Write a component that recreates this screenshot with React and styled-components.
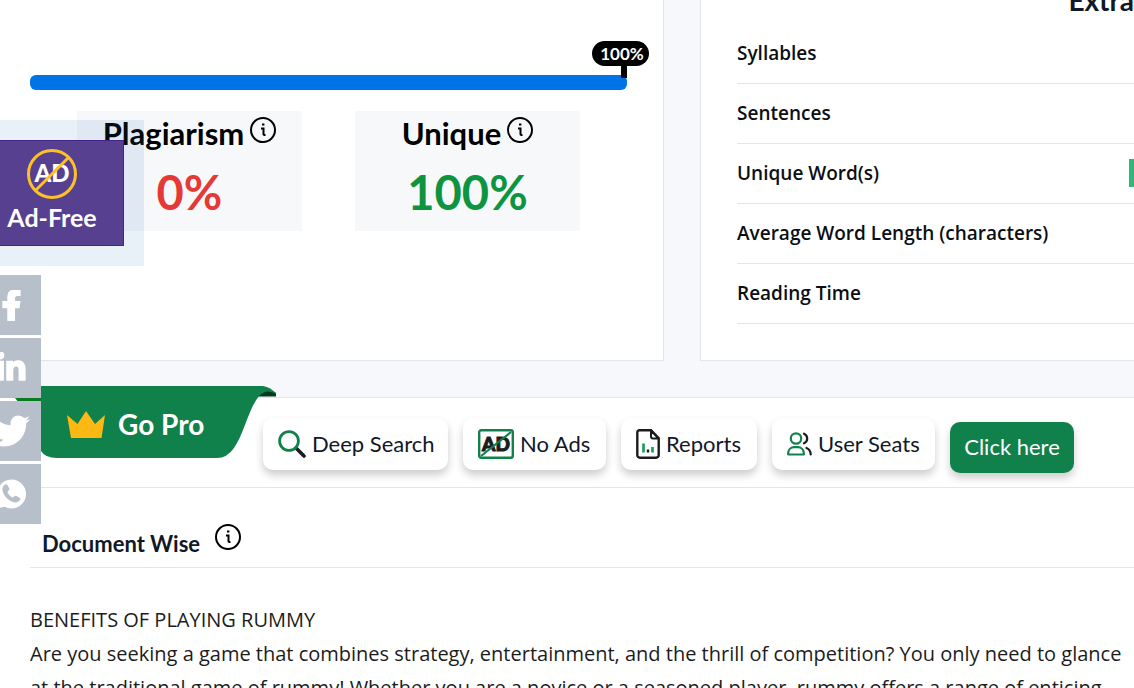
import React from 'react';
import styled, { createGlobalStyle } from 'styled-components';
import { FaFacebookF, FaLinkedinIn, FaTwitter } from 'react-icons/fa';

const GlobalStyle = createGlobalStyle`
  * { box-sizing: border-box; }
  body {
    margin: 0;
    background: #f7f8fb;
    color: #111827;
    font-family: Lato, "Open Sans", sans-serif;
    font-variant-ligatures: none;
    overflow-x: hidden;
  }
  a { color: inherit; text-decoration: none; }
  button { font: inherit; color: inherit; border: 0; padding: 0; background: none; cursor: pointer; }
`;

const stats = [
  { label: 'Syllables' },
  { label: 'Sentences' },
  { label: 'Unique Word(s)', badge: true },
  { label: 'Average Word Length (characters)' },
  { label: 'Reading Time' },
];

const InfoIcon = () => (
  <svg width="26" height="26" viewBox="0 0 26 26" fill="none" stroke="#000" strokeWidth="2">
    <circle cx="13" cy="13" r="12" />
    <path d="M11 11.5h2.5v6M13.5 17.2q0 1 2 .8" />
    <path d="M12 7.5h2.4" />
  </svg>
);

const WhatsappIcon = () => (
  <svg width="30" height="30" viewBox="0 0 30 30">
    <path fill="#fff" d="M15.5 0.5a14.5 14.5 0 1 1-6.8 27.3L0 29.5l2.6-7.8A14.5 14.5 0 0 1 15.500.5z" />
    <path fill="#b7bfca" d="M8.800 5.700c1.200-.9 2.200-.6 2.800.5l1.600 3.200c.4.9.1 1.600-.6 2.200l-1.200 1.300c1 2.500 2.900 4.500 5.500 5.700l1.500-1.400c.6-.6 1.300-.7 2-.3l3.100 1.800c1 .6 1.100 1.500.5 2.400-1.500 2.200-4.200 2.900-7 1.900-5.300-1.900-9-5.800-10.300-10.700-.7-2.700.1-5.100 2.100-6.600z" />
  </svg>
);

const NoAdBadge = () => (
  <svg width="50" height="50" viewBox="0 0 50 50">
    <text x="25" y="33" textAnchor="middle" fontFamily="Lato" fontWeight="900" fontSize="24" fill="#fff">AD</text>
    <circle cx="25" cy="25" r="23.500" fill="none" stroke="#fdc029" strokeWidth="3" />
    <path d="M8.500 41.500L41.500 8.500" stroke="#fdc029" strokeWidth="3" />
  </svg>
);

const SearchIcon = () => (
  <svg width="28" height="28" viewBox="0 0 28 28" fill="none">
    <path d="M18 18l8 8" stroke="#1c1c1c" strokeWidth="3.600" strokeLinecap="round" />
    <circle cx="11" cy="11" r="9.400" stroke="#10814b" strokeWidth="2.800" />
  </svg>
);

const NoAdsIcon = () => (
  <svg width="36" height="30" viewBox="0 0 36 30" fill="none">
    <text x="18" y="22" textAnchor="middle" fontFamily="Lato" fontWeight="900" fontSize="19" fill="#1c1c1c" stroke="#1c1c1c">AD</text>
    <rect x="1.200" y="1.200" width="33.600" height="27.600" rx="2" stroke="#10814b" strokeWidth="2.400" />
    <path d="M3 27L33 3" stroke="#10814b" strokeWidth="2.200" />
  </svg>
);

const ReportIcon = () => (
  <svg width="24" height="30" viewBox="0 0 24 30" fill="none">
    <path d="M3.500 1.300H15l7.700 8V26a2.600 2.600 0 0 1-2.600 2.700H3.900A2.600 2.600 0 0 1 1.300 26V3.500a2.200 2.200 0 0 1 2.200-2.200z" stroke="#1c1c1c" strokeWidth="2.400" />
    <path d="M15 1.500V7.500q0 2 2 2h5.500z" fill="#fff" stroke="#1c1c1c" strokeWidth="2" strokeLinejoin="round" />
    <path d="M7.500 14.500v9M16.500 18v5.500" stroke="#109a55" strokeWidth="2.600" />
    <path d="M12 20.500v3" stroke="#1c1c1c" strokeWidth="2.400" />
  </svg>
);

const UsersIcon = () => (
  <svg width="25" height="24" viewBox="0 0 25 24" fill="none" strokeWidth="2.200" strokeLinecap="round" strokeLinejoin="round">
    <circle cx="9" cy="6.500" r="5.200" stroke="#10814b" />
    <path d="M1.200 22.500v-1.800a6 6 0 0 1 6-5.500h3.600a6 6 0 0 1 6 5.500v1.800z" stroke="#10814b" />
    <path d="M17 1.700a5.200 5.200 0 0 1 0 9.600M19.500 16q4 1.500 4.200 6.500" stroke="#1c1c1c" />
  </svg>
);

const App = () => {
  const unique = 100;

  return (
    <>
      <GlobalStyle />
      <Results>
        <ScorePanel>
          <Track>
            <Fill style={{ width: `${unique}%` }} />
            <Bubble>{unique}%</Bubble>
          </Track>
          <Scores>
            <Score>
              <ScoreTitle>Plagiarism <InfoButton aria-label="About plagiarism"><InfoIcon /></InfoButton></ScoreTitle>
              <ScoreValue $color="#e53935">0%</ScoreValue>
            </Score>
            <Score>
              <ScoreTitle>Unique <InfoButton aria-label="About unique"><InfoIcon /></InfoButton></ScoreTitle>
              <ScoreValue $color="#0d9440">{unique}%</ScoreValue>
            </Score>
          </Scores>
        </ScorePanel>
        <StatsPanel>
          <StatsTitle>Extra</StatsTitle>
          <StatsTable>
            <tbody>
              {stats.map((stat) => (
                <tr key={stat.label}>
                  <th scope="row">{stat.label}</th>
                  <td>{stat.badge && <Badge />}</td>
                </tr>
              ))}
            </tbody>
          </StatsTable>
        </StatsPanel>
      </Results>

      <ProBar>
        <Ribbon>
          <RibbonShape viewBox="0 0 261 74" width="261" height="74">
            <path d="M0 12H27V22H8z" fill="#0a7a1e" />
            <path d="M240 10.500Q246 3 253 4Q259 5 261 7V10.500z" fill="#06391f" />
            <path d="M26 0H248Q256 1 261 8Q252 2 244 10C233 24 229 48 219 62Q212 72 202 72H42Q30 72 26 65z" fill="#10814b" />
          </RibbonShape>
          <RibbonLabel>
            <svg width="38" height="27" viewBox="0 0 38 27">
              <path d="M0 4L10.500 13L19 0L28 13L38 4L34.500 27H4z" fill="#fdb813" />
            </svg>
            Go Pro
          </RibbonLabel>
        </Ribbon>
        <Features>
          <Chip $width={185}><SearchIcon /> Deep Search</Chip>
          <Chip $width={143}><NoAdsIcon /> No Ads</Chip>
          <Chip $width={136}><ReportIcon /> Reports</Chip>
          <Chip $width={163}><UsersIcon /> User Seats</Chip>
          <ProButton>Click here</ProButton>
        </Features>
      </ProBar>

      <Document>
        <DocHeader>
          Document Wise
          <InfoButton aria-label="About document wise"><InfoIcon /></InfoButton>
        </DocHeader>
        <DocText>
          BENEFITS OF PLAYING RUMMY<br />
          Are you seeking a game that combines strategy, entertainment, and the thrill of competition? You only need to glance<br />
          at the traditional game of rummy! Whether you are a novice or a seasoned player, rummy offers a range of enticing
        </DocText>
      </Document>

      <AdFree>
        <AdFreeLink href="#ad-free"><NoAdBadge />Ad-Free</AdFreeLink>
      </AdFree>
      <Social>
        <SocialLink href="#facebook" aria-label="Facebook"><FaFacebookF size={31} stroke="#fff" strokeWidth={28} /></SocialLink>
        <SocialLink href="#linkedin" aria-label="LinkedIn"><FaLinkedinIn size={32} stroke="#fff" strokeWidth={20} /></SocialLink>
        <SocialLink href="#twitter" aria-label="Twitter"><FaTwitter size={38} /></SocialLink>
        <SocialLink href="#whatsapp" aria-label="WhatsApp"><WhatsappIcon /></SocialLink>
      </Social>
    </>
  );
};

const Results = styled.div`
  display: grid;
  grid-template-columns: 664fr 434fr;
  gap: 36px;
  margin-bottom: 36px;
`;

const ScorePanel = styled.section`
  padding: 75px 36px 100px 30px;
  background: #fff;
  border: solid #e2e5ea;
  border-width: 0 1px 1px 0;
`;

const Track = styled.div`
  position: relative;
  height: 15px;
  border-radius: 6px;
  background: #e9ecef;
`;

const Fill = styled.div`
  height: 100%;
  border-radius: 6px;
  background: #0073e6;
`;

const Bubble = styled.span`
  position: absolute;
  right: -22px;
  top: -34px;
  width: 57px;
  padding-left: 3px;
  border-radius: 13px;
  background: #000;
  color: #fff;
  font-size: 17px;
  font-weight: 700;
  line-height: 25px;
  text-align: center;

  &::after {
    content: '';
    position: absolute;
    right: 22px;
    top: 24px;
    width: 6px;
    height: 13px;
    background: #000;
  }
`;

const Scores = styled.div`
  display: flex;
  justify-content: center;
  gap: 53px;
  margin-top: 21px;
`;

const Score = styled.div`
  width: 225px;
  height: 120px;
  background: #f7f8fa;
  text-align: center;
`;

const InfoButton = styled.button`
  display: flex;
`;

const ScoreTitle = styled.h2`
  display: flex;
  justify-content: center;
  gap: 6px;
  margin: 0;
  padding-top: 6px;
  color: #000;
  font-size: 31px;
  font-weight: 700;
  line-height: 32px;
`;

const ScoreValue = styled.div`
  margin-top: 15px;
  color: ${(props) => props.$color};
  font-size: 47px;
  font-weight: 700;
  line-height: 56px;
`;

const StatsPanel = styled.section`
  display: flex;
  flex-direction: column;
  padding: 0 0 36px 36px;
  background: #fff;
  border: solid #e2e5ea;
  border-width: 0 0 1px 1px;
`;

const StatsTitle = styled.h2`
  margin: -18px 0 6px;
  font-size: 28px;
  font-weight: 700;
  line-height: 36px;
  text-align: right;
`;

const StatsTable = styled.table`
  width: 100%;
  border-collapse: separate;
  border-spacing: 0;

  th, td {
    height: 60px;
    padding: 0 0 2px;
    border-bottom: 1px solid #e2e5ea;
    color: #0b0f14;
    font-family: "Open Sans", sans-serif;
    font-size: 19px;
    font-weight: 600;
    text-align: left;
  }
`;

const Badge = styled.span`
  display: block;
  width: 5px;
  height: 28px;
  margin-left: auto;
  background: #2fb878;
`;

const ProBar = styled.section`
  position: relative;
  height: 91px;
  padding: 20px 0 0 263px;
  background: #fff;
  border: solid #e2e5ea;
  border-width: 1px 0;
`;

const Ribbon = styled.div`
  position: absolute;
  left: 15px;
  top: -12px;
`;

const RibbonShape = styled.svg`
  display: block;
`;

const RibbonLabel = styled.div`
  position: absolute;
  left: 52px;
  top: 20px;
  display: flex;
  align-items: center;
  gap: 13px;
  color: #fff;
  font-size: 28px;
  font-weight: 700;
  line-height: 36px;
  white-space: nowrap;
`;

const Features = styled.div`
  display: flex;
  gap: 15px;
`;

const Chip = styled.div`
  display: flex;
  align-items: center;
  gap: 6px;
  width: ${(props) => props.$width}px;
  height: 52px;
  padding: 0 0 0 15px;
  border-radius: 10px;
  background: #fff;
  box-shadow: 0 5px 8px rgba(0, 0, 0, 0.2);
  font-size: 22px;
  line-height: 30px;
  white-space: nowrap;

  svg { flex: none; }
`;

const ProButton = styled.button`
  width: 124px;
  height: 51px;
  margin-top: 4px;
  padding-bottom: 2px;
  border-radius: 10px;
  background: #10814b;
  box-shadow: 0 5px 8px rgba(0, 0, 0, 0.2);
  color: #fff;
  font-size: 22px;
`;

const Document = styled.section`
  padding-left: 30px;
  background: #fff;
`;

const DocHeader = styled.h3`
  display: flex;
  gap: 15px;
  height: 80px;
  margin: 0 0 35px;
  padding: 36px 0 0 12px;
  border-bottom: 1px solid #e2e5ea;
  font-size: 22px;
  font-weight: 700;
  line-height: 40px;
`;

const DocText = styled.p`
  margin: 0;
  color: #1c1c1c;
  font-family: "Open Sans", sans-serif;
  font-size: 20px;
  line-height: 34px;
  white-space: nowrap;
`;

const AdFree = styled.aside`
  position: fixed;
  left: -40px;
  top: 120px;
  padding: 20px;
  background: rgba(25, 105, 185, 0.1);
`;

const AdFreeLink = styled.a`
  display: flex;
  flex-direction: column;
  align-items: center;
  width: 144px;
  height: 106px;
  padding-top: 8px;
  border: 1px solid #45238a;
  background: #56408f;
  color: #fff;
  font-size: 25px;
  font-weight: 700;
  line-height: 36px;
`;

const Social = styled.nav`
  position: fixed;
  left: -19px;
  top: 275px;
  display: grid;
  gap: 3px;
`;

const SocialLink = styled.a`
  display: flex;
  align-items: center;
  justify-content: center;
  width: 60px;
  height: 60px;
  background: #b7bfca;
  color: #fff;
`;

export default App;
